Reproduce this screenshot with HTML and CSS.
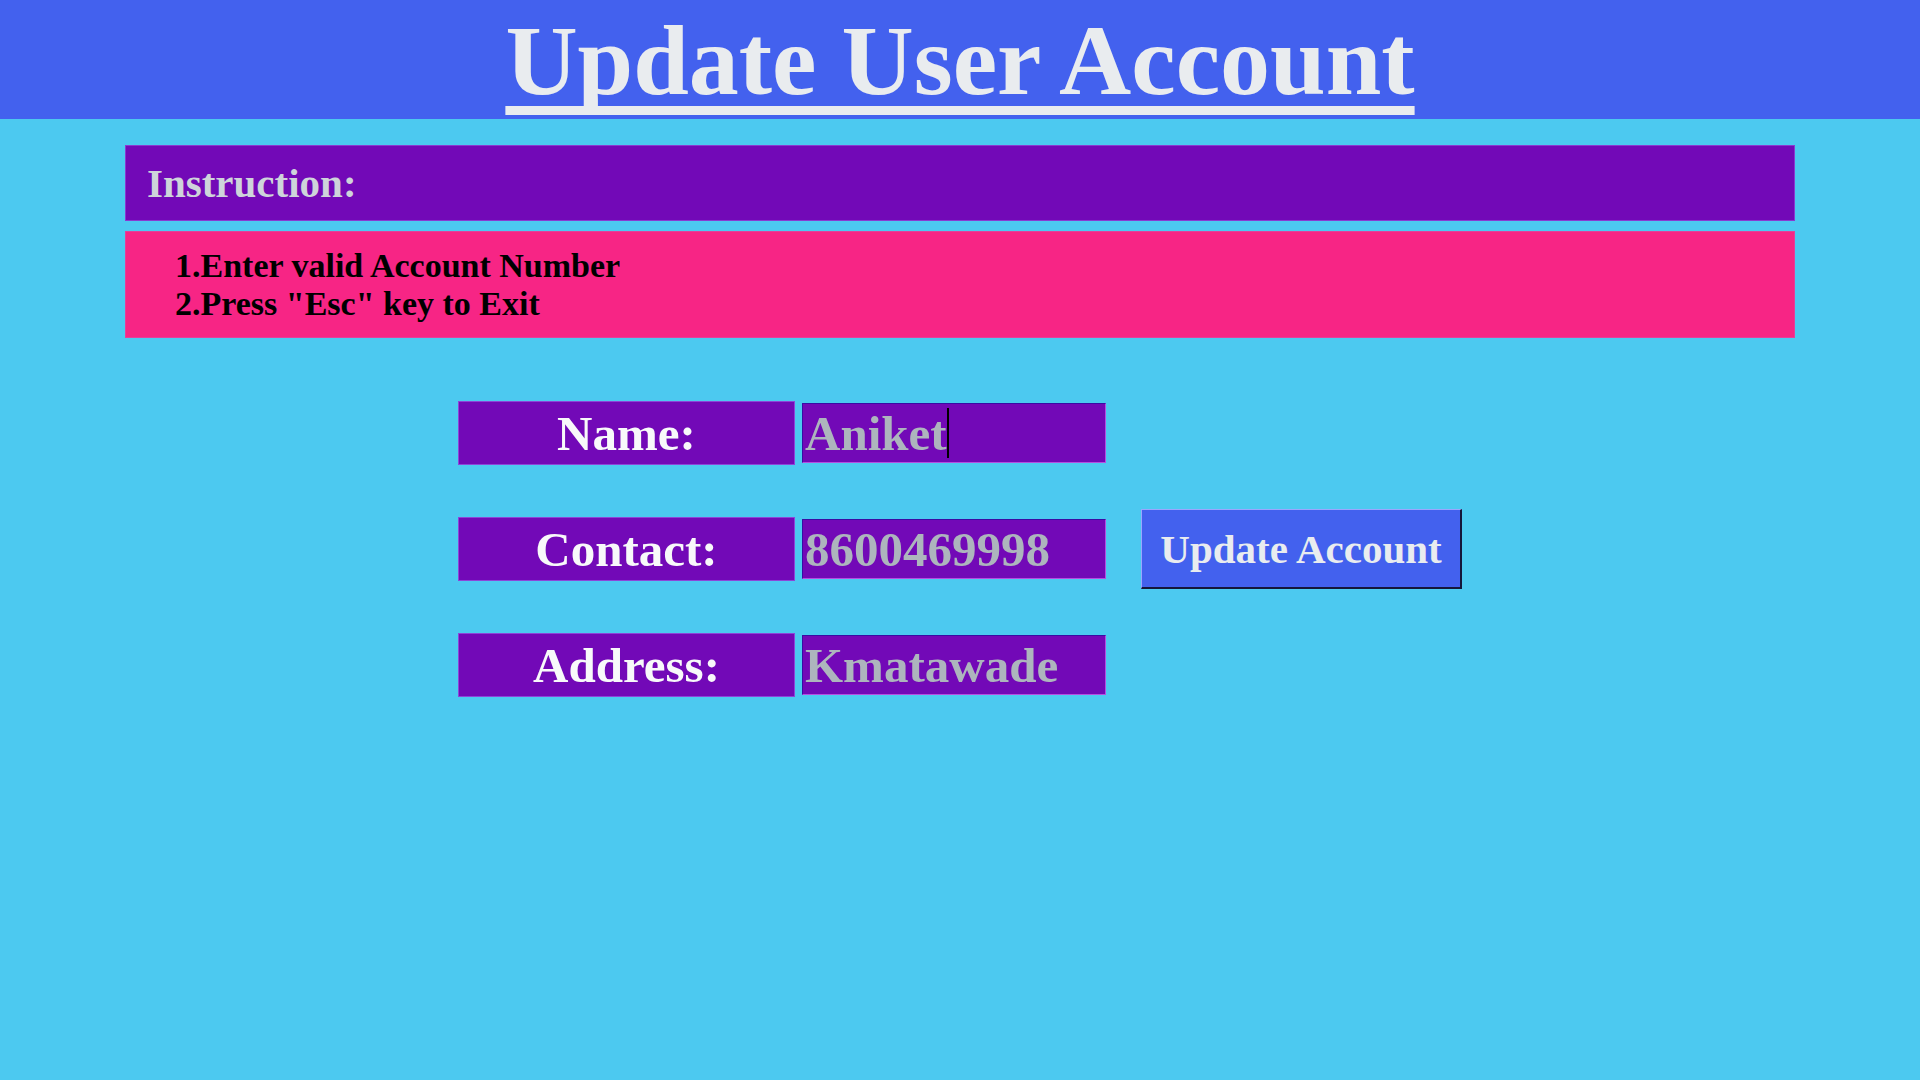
FILE: index.html
```html
<!DOCTYPE html>
<html lang="en">
<head>
<meta charset="utf-8">
<title>Update User Account</title>
<link rel="stylesheet" href="styles.css">
</head>
<body>
<header class="topbar">
  <h1 class="title">Update User Account</h1>
</header>
<section class="instructions">
  <div class="instr-head">Instruction:</div>
  <div class="instr-body">
    <div class="instr-line">1.Enter valid Account Number</div>
    <div class="instr-line">2.Press "Esc" key to Exit</div>
  </div>
</section>
<form class="form" onsubmit="return false">
  <div class="label">Name:</div>
  <div class="field"><span class="val">Aniket</span><span class="caret"></span></div>
  <div class="cell-empty"></div>

  <div class="label">Contact:</div>
  <div class="field"><span class="val">8600469998</span></div>
  <div class="cell-btn"><button class="btn" type="button">Update Account</button></div>

  <div class="label">Address:</div>
  <div class="field"><span class="val">Kmatawade</span></div>
  <div class="cell-empty"></div>
</form>
</body>
</html>
```
FILE: styles.css
```css
html, body {
  margin: 0;
  padding: 0;
}
body {
  background: #4cc9f0;
  min-height: 1080px;
  font-family: "Liberation Serif", "Times New Roman", serif;
  font-weight: bold;
}
.topbar {
  background: #4361ee;
  height: 119px;
  box-sizing: border-box;
  padding-top: 11px;
  text-align: center;
}
.title {
  margin: 0;
  font-family: "Liberation Serif", serif;
  font-size: 100px;
  line-height: 100px;
  font-weight: bold;
  color: #e9ecef;
  text-decoration: underline;
  text-decoration-thickness: 9px;
  text-underline-offset: 12px;
  text-decoration-skip-ink: none;
}
.instructions {
  margin: 26px 125px 0;
}
.instr-head {
  background: #7209b7;
  height: 76px;
  box-sizing: border-box;
  border: 1px solid #8a3ad0;
  padding-left: 21px;
  display: flex;
  align-items: center;
  font-size: 41px;
  color: #ced4da;
}
.instr-body {
  margin-top: 10px;
  background: #f72585;
  height: 107px;
  box-sizing: border-box;
  border: 1px solid #e3409a;
  padding: 15px 0 0 49px;
  font-size: 34px;
  line-height: 38px;
  color: #000;
}
.form {
  margin: 63px auto 0;
  width: 1004px;
  display: grid;
  grid-template-columns: 337px 304px 363px;
  grid-auto-rows: 64px;
  column-gap: 7px;
  row-gap: 52px;
}
.form .cell-btn, .form .cell-empty {
  margin-left: 28px;
}
.label {
  background: #7209b7;
  border: 1px solid #8d45d8;
  box-sizing: border-box;
  display: flex;
  align-items: center;
  justify-content: center;
  font-size: 49px;
  color: #f8f9fa;
}
.field {
  align-self: center;
  height: 60px;
  box-sizing: border-box;
  background: #7209b7;
  border: 1px solid;
  border-color: #3a0ca3 #b54ee0 #b54ee0 #3a0ca3;
  padding-left: 2px;
  display: flex;
  align-items: center;
  font-size: 49px;
  color: #adb5bd;
  white-space: nowrap;
}
.caret {
  display: inline-block;
  width: 2px;
  height: 50px;
  background: #000;
}
.cell-btn {
  display: flex;
  align-items: center;
}
.btn {
  width: 321px;
  height: 80px;
  box-sizing: border-box;
  background: #4361ee;
  border-style: solid;
  border-width: 1px 2px 2px 1px;
  border-color: #9aa6ff #15163a #15163a #9aa6ff;
  font-family: "Liberation Serif", "Times New Roman", serif;
  font-weight: bold;
  font-size: 41px;
  color: #e9ecef;
  padding: 0;
  margin: 0;
}
```
